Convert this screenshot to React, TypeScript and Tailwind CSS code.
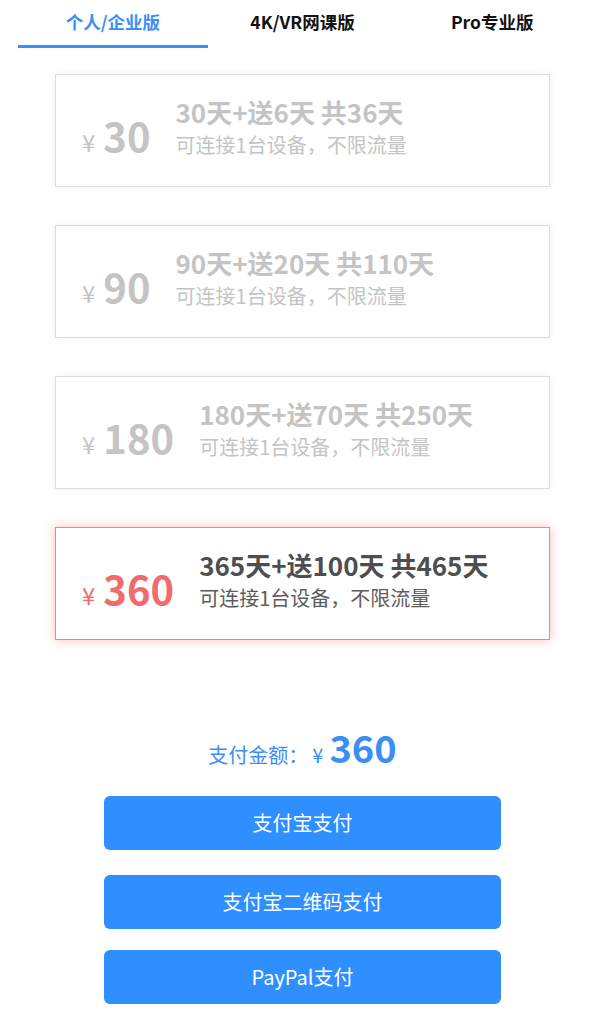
import React from "react";

const plans = [
  { price: "30", title: "30天+送6天 共36天" },
  { price: "90", title: "90天+送20天 共110天" },
  { price: "180", title: "180天+送70天 共250天" },
  { price: "360", title: "365天+送100天 共465天" },
];

const tabs = ["个人/企业版", "4K/VR网课版", "Pro专业版"];

export default function App() {
  const selected = 3;

  return (
    <div
      className="w-[605px] min-h-[1024px] bg-white"
      style={{ fontFamily: '"Noto Sans CJK SC", "Noto Sans", sans-serif' }}
    >
      {/* Tabs */}
      <div className="flex px-[18px]">
        {tabs.map((t, i) => (
          <div key={t} className="flex-1 flex flex-col items-center">
            <div
              className={`h-[45px] flex items-center text-[17.5px] font-bold ${
                i === 0 ? "text-[#3a8ef5]" : "text-[#111]"
              }`}
            >
              {t}
            </div>
            <div className={`h-[3px] w-full ${i === 0 ? "bg-[#3a8ef5]" : ""}`} />
          </div>
        ))}
      </div>

      {/* Plans */}
      <div className="flex flex-col items-center gap-[38px] mt-[26px]">
        {plans.map((p, i) => {
          const active = i === selected;
          return (
            <div
              key={p.price}
              className={`w-[495px] h-[113px] flex items-center pl-[26px] border ${
                active
                  ? "border-[#f08585] shadow-[0_0_10px_rgba(240,110,110,0.45)]"
                  : "border-[#dcdcdc] shadow-[0_0_8px_rgba(0,0,0,0.06)]"
              }`}
            >
              <div
                className={`flex items-baseline pt-[14px] ${
                  active ? "text-[#f06b6b]" : "text-[#c4c4c4]"
                }`}
              >
                <span className="text-[24px] mr-[8px]">¥</span>
                <span className="text-[40px] font-bold leading-none">{p.price}</span>
              </div>
              <div className="ml-[25px] mb-[6px] flex flex-col">
                <div
                  className={`text-[26px] font-bold leading-[34px] ${
                    active ? "text-[#4e4e4e]" : "text-[#c4c4c4]"
                  }`}
                >
                  {p.title}
                </div>
                <div
                  className={`text-[20px] leading-[32px] ${
                    active ? "text-[#5c5c5c]" : "text-[#c4c4c4]"
                  }`}
                >
                  可连接1台设备，不限流量
                </div>
              </div>
            </div>
          );
        })}
      </div>

      {/* Amount */}
      <div className="flex items-baseline justify-center mt-[88px] text-[#3a8ef5]">
        <span className="text-[20px]">支付金额：</span>
        <span className="text-[20px] ml-[4px] mr-[6px]">¥</span>
        <span className="text-[38px] font-bold leading-none">360</span>
      </div>

      {/* Buttons */}
      <div className="flex flex-col items-center mt-[26px]">
        <button className="w-[397px] h-[54px] rounded-[6px] bg-[#2f8ffe] text-white text-[20px]">
          支付宝支付
        </button>
        <button className="w-[397px] h-[54px] rounded-[6px] bg-[#2f8ffe] text-white text-[20px] mt-[25px]">
          支付宝二维码支付
        </button>
        <button className="w-[397px] h-[54px] rounded-[6px] bg-[#2f8ffe] text-white text-[20px] mt-[21px]">
          PayPal支付
        </button>
      </div>
    </div>
  );
}
